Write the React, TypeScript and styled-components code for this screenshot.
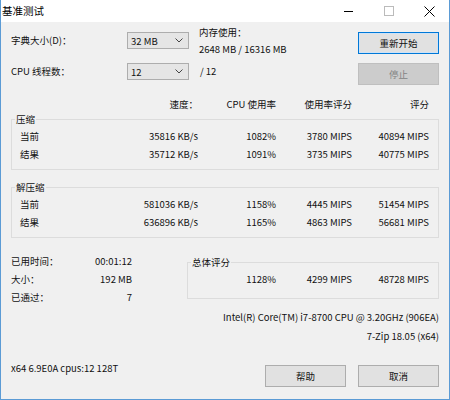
import React from 'react'
import styled, { createGlobalStyle } from 'styled-components'

const GlobalStyle = createGlobalStyle`
  html, body {
    margin: 0;
    padding: 0;
    background: #ffffff;
  }
  body {
    font-family: "Noto Sans CJK SC", "Noto Sans", sans-serif;
    font-size: 9.5px;
    color: #111111;
  }
  * {
    box-sizing: border-box;
  }
`

const Window = styled.div`
  width: 450px;
  height: 400px;
  display: flex;
  flex-direction: column;
  background: #f0f0f0;
  border: 1px solid #5b9bd5;
  border-top: none;
`

const TitleBar = styled.div`
  flex: none;
  height: 22px;
  display: flex;
  align-items: center;
  background: #ffffff;
  padding-left: 1px;
`

const Title = styled.div`
  flex: 1;
  font-size: 10.5px;
  line-height: 22px;
  color: #000000;
`

const CaptionButton = styled.div`
  width: 40px;
  height: 22px;
  display: flex;
  align-items: center;
  justify-content: center;
`

const Content = styled.div`
  flex: 1;
  display: flex;
  flex-direction: column;
  padding: 10px 10px 12px 9px;
`

const Setup = styled.div`
  display: grid;
  grid-template-columns: 117px 62px 1fr 81px;
  grid-template-rows: 22px 22px;
  row-gap: 9px;
`

const FieldLabel = styled.div`
  line-height: 17px;
  padding-left: 1px;
`

const Combo = styled.div`
  height: 17px;
  display: flex;
  align-items: center;
  justify-content: space-between;
  padding: 0 5px 0 3px;
  background: #e5e5e5;
  border: 1px solid #adadad;
`

const MemoryInfo = styled.div`
  padding-left: 10px;
  line-height: 17px;
  margin-top: -8px;
`

const Threads = styled.div`
  padding-left: 11px;
  line-height: 17px;
`

const Button = styled.button<{ $primary?: boolean }>`
  width: 81px;
  height: 22px;
  padding: 0;
  font: inherit;
  color: #111111;
  background: #e1e1e1;
  border: 1px solid ${p => (p.$primary ? '#0078d7' : '#adadad')};
  box-shadow: ${p => (p.$primary ? 'inset 0 0 0 1px #cfe3f7' : 'none')};

  &:disabled {
    background: #cccccc;
    border-color: #bfbfbf;
    color: #838383;
  }
`

const Cols = styled.div`
  display: grid;
  grid-template-columns: 40px 1fr 78px 76px 77px;
  line-height: 18px;
  text-align: right;
`

const HeaderRow = styled(Cols)`
  margin-top: 10px;
  padding-right: 10px;
`

const Name = styled.span`
  text-align: left;
`

const Group = styled.fieldset<{ $gap: number; $bottom: number }>`
  margin: ${p => p.$gap}px 0 0 1px;
  padding: 2px 9px ${p => p.$bottom}px 8px;
  min-width: 0;
  border: 1px solid #dcdcdc;
`

const Legend = styled.legend`
  margin-left: -5px;
  padding: 0 1px;
  line-height: 12px;
`

const Summary = styled.div`
  margin-top: 14px;
  display: grid;
  grid-template-columns: 122px 1fr;
  column-gap: 55px;
  align-items: start;
`

const Stats = styled.div`
  display: grid;
  grid-template-columns: 1fr auto;
  line-height: 18px;
  padding-left: 1px;
`

const StatValue = styled.span`
  justify-self: end;
`

const TotalGroup = styled(Group)`
  margin-left: 0;
`

const TotalRow = styled.div`
  display: grid;
  grid-template-columns: 1fr 78px 76px 77px;
  line-height: 18px;
  text-align: right;
`

const Info = styled.div`
  margin-top: 2px;
  line-height: 19px;
  text-align: right;
`

const Footer = styled.div`
  margin-top: auto;
  display: flex;
  align-items: flex-start;
  gap: 12px;
`

const Version = styled.div`
  flex: 1;
  line-height: 18px;
  margin-top: -6px;
  padding-left: 1px;
`

const Chevron = () => (
  <svg width='8' height='5' viewBox='0 0 8 5'>
    <polyline points='0.5,0.5 4,4 7.5,0.5' fill='none' stroke='#444' strokeWidth='1' />
  </svg>
)

type Result = { name: string; speed: string; cpu: string; rating: string; total: string }

const compress: Result[] = [
  { name: '当前', speed: '35816 KB/s', cpu: '1082%', rating: '3780 MIPS', total: '40894 MIPS' },
  { name: '结果', speed: '35712 KB/s', cpu: '1091%', rating: '3735 MIPS', total: '40775 MIPS' },
]

const decompress: Result[] = [
  { name: '当前', speed: '581036 KB/s', cpu: '1158%', rating: '4445 MIPS', total: '51454 MIPS' },
  { name: '结果', speed: '636896 KB/s', cpu: '1165%', rating: '4863 MIPS', total: '56681 MIPS' },
]

const stats = [
  ['已用时间：', '00:01:12'],
  ['大小：', '192 MB'],
  ['已通过：', '7'],
]

const ResultRows: React.FC<{ rows: Result[] }> = ({ rows }) => (
  <>
    {rows.map(r => (
      <Cols key={r.name}>
        <Name>{r.name}</Name>
        <span>{r.speed}</span>
        <span>{r.cpu}</span>
        <span>{r.rating}</span>
        <span>{r.total}</span>
      </Cols>
    ))}
  </>
)

const App: React.FC = () => {
  return (
    <Window>
      <GlobalStyle />
      <TitleBar>
        <Title>基准测试</Title>
        <CaptionButton>
          <svg width='10' height='10' viewBox='0 0 10 10'>
            <line x1='0' y1='5.5' x2='9' y2='5.5' stroke='#000' strokeWidth='1' />
          </svg>
        </CaptionButton>
        <CaptionButton>
          <svg width='10' height='10' viewBox='0 0 10 10'>
            <rect x='0.5' y='0.5' width='9' height='9' fill='none' stroke='#bbb' strokeWidth='1' />
          </svg>
        </CaptionButton>
        <CaptionButton>
          <svg width='11' height='11' viewBox='0 0 11 11'>
            <path d='M0.5 0.5 L10.5 10.5 M10.5 0.5 L0.5 10.5' stroke='#000' strokeWidth='1' />
          </svg>
        </CaptionButton>
      </TitleBar>

      <Content>
        <Setup>
          <FieldLabel>字典大小(D)：</FieldLabel>
          <Combo>
            <span>32 MB</span>
            <Chevron />
          </Combo>
          <MemoryInfo>
            内存使用：
            <br />
            2648 MB / 16316 MB
          </MemoryInfo>
          <Button $primary>重新开始</Button>

          <FieldLabel>CPU 线程数：</FieldLabel>
          <Combo>
            <span>12</span>
            <Chevron />
          </Combo>
          <Threads>/ 12</Threads>
          <Button disabled>停止</Button>
        </Setup>

        <HeaderRow>
          <span />
          <span>速度：</span>
          <span>CPU 使用率</span>
          <span>使用率评分</span>
          <span>评分</span>
        </HeaderRow>

        <Group $gap={0} $bottom={6}>
          <Legend>压缩</Legend>
          <ResultRows rows={compress} />
        </Group>

        <Group $gap={11} $bottom={6}>
          <Legend>解压缩</Legend>
          <ResultRows rows={decompress} />
        </Group>

        <Summary>
          <Stats>
            {stats.map(([label, value]) => (
              <React.Fragment key={label}>
                <span>{label}</span>
                <StatValue>{value}</StatValue>
              </React.Fragment>
            ))}
          </Stats>
          <TotalGroup $gap={4} $bottom={10}>
            <Legend>总体评分</Legend>
            <TotalRow>
              <span />
              <span>1128%</span>
              <span>4299 MIPS</span>
              <span>48728 MIPS</span>
            </TotalRow>
          </TotalGroup>
        </Summary>

        <Info>
          Intel(R) Core(TM) i7-8700 CPU @ 3.20GHz (906EA)
          <br />
          7-Zip 18.05 (x64)
        </Info>

        <Footer>
          <Version>x64 6.9E0A cpus:12 128T</Version>
          <Button>帮助</Button>
          <Button>取消</Button>
        </Footer>
      </Content>
    </Window>
  )
}

export default App
